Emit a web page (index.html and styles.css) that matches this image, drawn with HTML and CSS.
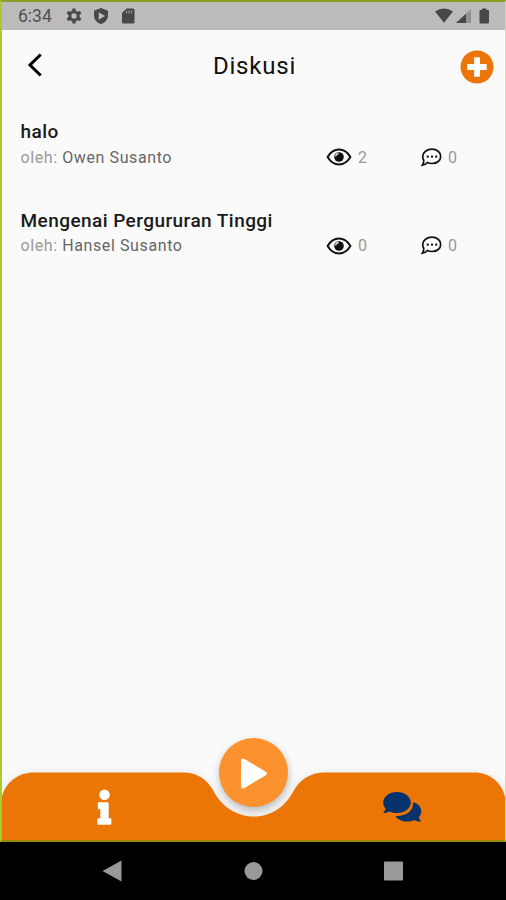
FILE: index.html
```html
<!DOCTYPE html>
<html lang="id">
<head>
<meta charset="utf-8">
<title>Diskusi</title>
<link rel="stylesheet" href="styles.css">
</head>
<body>
<svg class="symbols" aria-hidden="true">
  <symbol id="eye" viewBox="0 0 26 18">
    <path d="M1.600 9Q6 1.600 13 1.600T24.400 9Q20 16.400 13 16.400T1.600 9Z" fill="none" stroke="#111" stroke-width="2"/>
    <circle cx="13" cy="9" r="4.800" fill="#111"/>
    <path d="M9.600 8.400Q10 5.800 12.600 5.500" fill="none" stroke="#ddd" stroke-width="1.300"/>
  </symbol>
  <symbol id="comment" viewBox="0 0 21 19">
    <path d="M11 1.200C16 1.200 19.700 4.300 19.700 8.400S16 15.500 11 15.500C9.200 15.500 7.600 15.200 6.300 14.500Q4.500 16.900 1.300 17.200Q3 15 2.700 12.100Q1.700 10.400 1.700 8.400C1.700 4.300 6 1.200 11 1.200Z" fill="none" stroke="#111" stroke-width="1.700"/>
    <circle cx="6.800" cy="8.700" r="1.100"/><circle cx="11" cy="8.700" r="1.100"/><circle cx="15.200" cy="8.700" r="1.100"/>
  </symbol>
</svg>
<div class="screen">
  <div class="status">
    <span class="clock">6:34</span>
    <svg class="status-left" width="72" height="18" viewBox="0 0 72 18" fill="#484848">
      <circle cx="8" cy="9" r="4.200" fill="none" stroke="#484848" stroke-width="3"/>
      <path d="M8 1.400V4M8 14V16.600M1.400 5.200L3.800 6.600M12.200 11.400L14.600 12.800M1.400 12.800L3.800 11.400M12.200 6.600L14.600 5.200" stroke="#484848" stroke-width="3.200"/>
      <path d="M35 1L42 3.700V8.500C42 12.500 39.300 15.700 35 17C30.700 15.700 28 12.500 28 8.500V3.700Z"/>
      <path d="M32.700 5.200L39 9L32.700 12.800Z" fill="#bbb"/>
      <path d="M60.500 1.500H67Q68.500 1.500 68.500 3V15Q68.500 16.500 67 16.500H57.500Q56 16.500 56 15V6Z"/>
      <path d="M60.500 3.500V6.500M63 3.500V6.500M65.500 3.500V6.500" stroke="#999" stroke-width="1.200"/>
    </svg>
    <svg class="status-right" width="58" height="18" viewBox="0 0 58 18" fill="#484848">
      <path d="M1 4.500Q10 -1.500 19 4.500L10 15.700Z"/>
      <path d="M37 2V16H22Z" fill="#929292"/>
      <path d="M32 6.700V16H22Z"/>
      <path d="M48 1.500H52.500V3H54Q55 3 55 4V15.500Q55 16.500 54 16.500H46.500Q45.500 16.500 45.500 15.500V4Q45.500 3 46.500 3H48Z"/>
    </svg>
  </div>
  <header class="header">
    <svg class="back" width="16" height="26" viewBox="0 0 16 26"><path d="M13.700 2.500L3 13L13.700 23.500" fill="none" stroke="#000" stroke-width="3"/></svg>
    <h1 class="title">Diskusi</h1>
    <svg class="add" width="34" height="34" viewBox="0 0 34 34"><circle cx="17" cy="17" r="16.500" fill="#eb7506"/><path d="M17 7.300V26.700M7.300 17H26.700" stroke="#fff" stroke-width="5.800"/></svg>
  </header>
  <main class="list">
    <article class="topic">
      <h2 class="topic-name">halo</h2>
      <div class="meta">
        <p class="author"><span class="by">oleh:</span> Owen Susanto</p>
        <span class="views"><svg width="26" height="18"><use href="#eye"/></svg>2</span>
        <span class="replies"><svg width="21" height="19"><use href="#comment"/></svg>0</span>
      </div>
    </article>
    <article class="topic">
      <h2 class="topic-name">Mengenai Pergururan Tinggi</h2>
      <div class="meta">
        <p class="author"><span class="by">oleh:</span> Hansel Susanto</p>
        <span class="views"><svg width="26" height="18"><use href="#eye"/></svg>0</span>
        <span class="replies"><svg width="21" height="19"><use href="#comment"/></svg>0</span>
      </div>
    </article>
  </main>
  <footer class="tabs">
    <svg width="506" height="112" viewBox="0 730 506 112">
      <defs>
        <filter id="soft" x="-30%" y="-30%" width="160%" height="160%"><feGaussianBlur stdDeviation="4"/></filter>
        <filter id="edge" x="-5%" y="-20%" width="110%" height="140%"><feGaussianBlur stdDeviation="4"/></filter>
        <path id="bar" d="M2 842V797C5 783 18 772.500 34 772.500H183C198 772.500 207 780 213 790C221 806 236 816.500 254 816.500S286 806 294 790C300 780 310 772.500 325 772.500H474C490 772.500 502 783 505 797V842Z"/>
      </defs>
      <use href="#bar" fill="#000" opacity=".08" filter="url(#edge)"/>
      <circle cx="254" cy="776" r="34" fill="#000" opacity=".3" filter="url(#soft)"/>
      <use href="#bar" fill="#eb7606"/>
      <circle cx="253.500" cy="772.500" r="34.500" fill="#fb922d"/>
      <path d="M243 760.500L264.800 773.500L243 786.500Z" fill="#fff" stroke="#fff" stroke-width="4" stroke-linejoin="round"/>
      <circle cx="104.500" cy="794.800" r="5.300" fill="#fff"/>
      <path d="M99 803.500H107.500V819.500H110.200V823.500H98.500V819.500H101.500V808H99Z" fill="#fff" stroke="#fff" stroke-width="2.400" stroke-linejoin="round"/>
      <path d="M413 802C418 803.500 421.300 807 421.300 811.300C421.300 813.700 420.200 815.500 418.900 817C419.300 819 420.300 820.200 421.300 821.500C418.500 821.800 416.300 821 414.400 819.900C407.500 823.100 398.500 821.500 395.500 816C406 816.500 414 811 413 802Z" fill="#06336d"/>
      <path d="M397 792C404.700 792 410.800 796.700 410.800 802.500S404.700 813 397 813C394.300 813 391.800 812.500 389.700 811.500C387.700 812.500 385.600 813.200 383.100 813C384.300 811.700 385.200 810.300 385.600 808.600C384.100 806.900 383.200 804.800 383.200 802.500C383.200 796.700 389.300 792 397 792Z" fill="#06336d"/>
    </svg>
  </footer>
  <div class="frame"></div>
</div>
<nav class="system">
  <svg width="506" height="58" viewBox="0 0 506 58" fill="#999">
    <path d="M102.500 29L121.500 18.500V39.500Z"/>
    <circle cx="253.500" cy="29" r="9"/>
    <rect x="384" y="19.500" width="19" height="19" rx="1"/>
  </svg>
</nav>
</body>
</html>
```

FILE: styles.css
```css
* { box-sizing: border-box; }
body {
  margin: 0;
  width: 506px;
  height: 900px;
  overflow: hidden;
  background: #000;
  font-family: Roboto, "Liberation Sans", sans-serif;
}
svg { display: block; flex: none; }
.symbols { position: absolute; width: 0; height: 0; }
.screen {
  position: relative;
  display: flex;
  flex-direction: column;
  height: 842px;
  background: #fafafa;
}
.frame {
  position: absolute;
  inset: 0;
  border: 2px solid #a5cd2d;
  border-top-color: #8aa024;
  border-right: 1px solid #cee67c;
  border-bottom-color: #998a00;
}
.status {
  display: flex;
  align-items: center;
  height: 30px;
  padding: 2px 14px 0 18px;
  background: #bbb;
  color: #505050;
}
.clock { width: 48px; font-size: 17.5px; }
.status-right { margin-left: auto; }
.header {
  display: flex;
  align-items: center;
  justify-content: space-between;
  height: 73px;
  padding: 0 12px 0 27px;
}
.back { margin-bottom: 3px; margin-right: 6px; }
.title {
  margin: 0 0 2px;
  font-size: 24px;
  font-weight: 400;
  letter-spacing: .8px;
  color: #111;
}
.list { flex: 1; padding: 17px 21px 0 20.5px; }
.topic { height: 88.5px; }
.topic-name {
  margin: 0;
  font-size: 19px;
  line-height: 24px;
  font-weight: 500;
  letter-spacing: .44px;
  color: #1a1a1a;
}
.meta {
  display: grid;
  grid-template-columns: 305.5px 95px 1fr;
  align-items: center;
  height: 26px;
  font-size: 16px;
  color: #999;
}
.author { margin: 0; letter-spacing: .6px; color: #666; }
.by { color: #999; }
.views, .replies { display: flex; align-items: center; gap: 6px; }
.tabs { height: 112px; }
.system { height: 58px; background: #000; }
```
